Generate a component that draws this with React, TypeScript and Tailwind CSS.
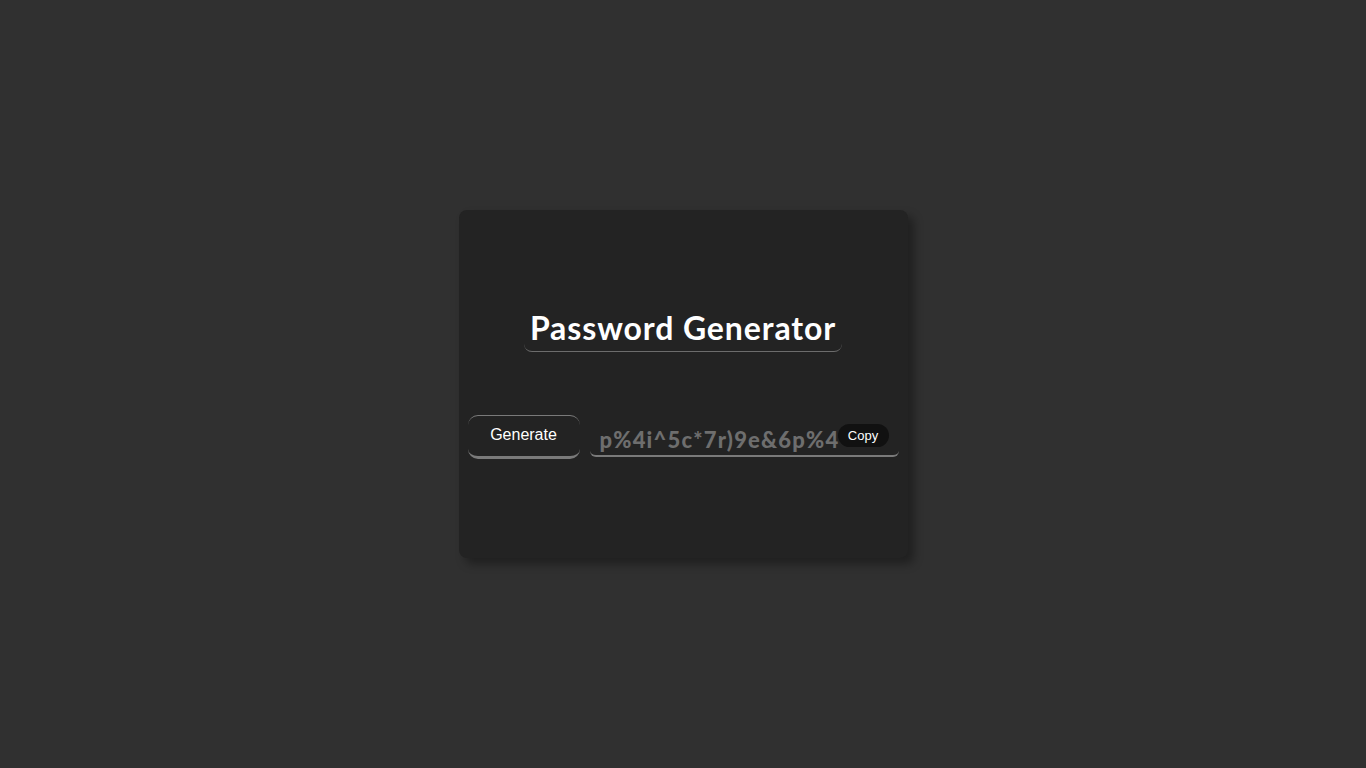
import { useState } from "react";

export default function App() {
  const [password] = useState("p%4i^5c*7r)9e&6p%4");

  return (
    <div className="min-h-screen w-full bg-[#303030] flex items-center justify-center">
      <div className="w-[449px] h-[348px] rounded-lg bg-[#232323] shadow-[6px_6px_10px_rgba(0,0,0,0.35)] flex flex-col items-center pt-[98px]">
        <h1 className="font-['Lato','Open_Sans',sans-serif] font-bold text-[32px] leading-[40px] tracking-[0.9px] text-white px-[6px] pb-[3px] border-b border-[#6c6c6c] rounded-lg">
          Password Generator
        </h1>

        <div className="mt-[63px] w-full px-[9px] flex items-start gap-[10px]">
          <button className="w-[112px] h-[44px] shrink-0 rounded-[10px] border-t border-b-[3px] border-[#7a7a7a] bg-[#232323] text-white text-[16px] font-['Liberation_Sans',Arial,sans-serif] pb-[3px]">
            Generate
          </button>

          <div className="relative flex-1 mt-[3px]">
            <input
              readOnly
              value={password}
              className="w-full h-[39px] bg-transparent outline-none border-b-2 border-[#7a7a7a] rounded-md pt-[6px] pl-[10px] pr-[60px] font-['Lato','Open_Sans',sans-serif] font-black text-[22px] tracking-[1.2px] text-[#6e6e6e]"
            />
            <button className="absolute right-[10px] top-[6px] w-[51px] h-[23px] rounded-full bg-[#111111] text-white text-[13px] font-['Liberation_Sans',Arial,sans-serif]">
              Copy
            </button>
          </div>
        </div>
      </div>
    </div>
  );
}
